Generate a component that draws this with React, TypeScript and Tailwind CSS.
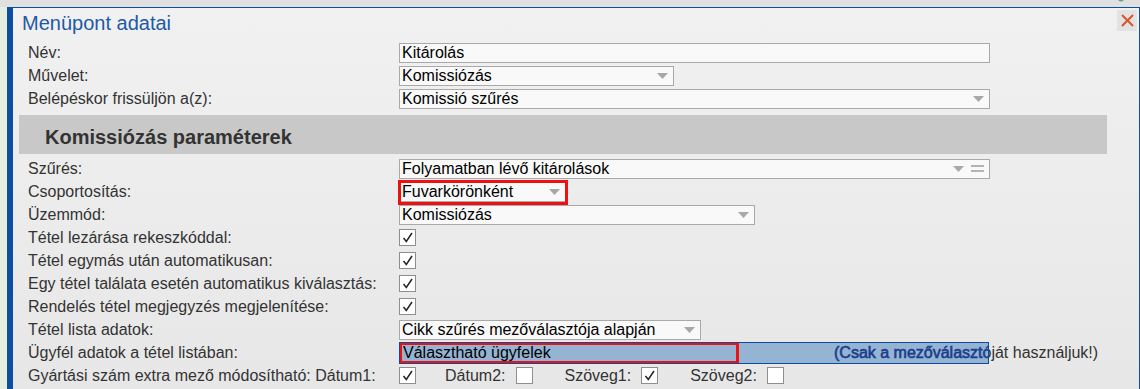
import React from 'react';

const font = { fontFamily: '"Liberation Sans", Arial, sans-serif' };

function Arrow() {
  return (
    <svg width="11" height="6" viewBox="0 0 11 6" className="shrink-0">
      <path d="M0 0 H11 L5.5 6 Z" fill="#a8a8a8" />
    </svg>
  );
}

function Select({ value, width, extra }: { value: string; width: string; extra?: boolean }) {
  return (
    <div className={`${width} h-[20px] border border-[#a9a9a9] bg-[#f9f9f9] flex items-center pl-[2px] pr-[5px]`}>
      <span className="flex-1 text-[16px] leading-[18px] text-black whitespace-nowrap">{value}</span>
      <Arrow />
      {extra && (
        <div className="ml-[7px] w-[13px] flex flex-col gap-[3px]">
          <div className="h-[2px] bg-[#b4b4b4]" />
          <div className="h-[2px] bg-[#b4b4b4]" />
        </div>
      )}
    </div>
  );
}

function Check({ checked }: { checked?: boolean }) {
  return (
    <div className="w-[17px] h-[17px] border border-[#8e8e8e] bg-white flex items-center justify-center shrink-0">
      {checked && (
        <svg width="15" height="15" viewBox="0 0 15 15">
          <path d="M3.5 8 L6.3 11.5 L12 3" fill="none" stroke="#222" strokeWidth="1.5" />
        </svg>
      )}
    </div>
  );
}

function Row({ label, children }: { label: string; children?: React.ReactNode }) {
  return (
    <div className="flex items-center h-[23px]">
      <div className="w-[380px] pl-[9px] text-[16px] text-[#333] whitespace-nowrap">{label}</div>
      {children}
    </div>
  );
}

export default function App() {
  return (
    <div className="w-[1140px] h-[389px] overflow-hidden flex flex-col bg-[#e0e0e0] relative" style={font}>
      {/* top strip */}
      <div className="h-[7px] shrink-0 relative">
        <svg className="absolute left-[1116px] top-[-6px]" width="10" height="10" viewBox="0 0 10 10">
          <path d="M0 3 Q5 12 10 3 L10 0 L0 0 Z" fill="#4fae7c" />
        </svg>
      </div>

      <div className="flex flex-1 min-h-0">
        <div className="w-[7px] bg-[#e4efdf]" />
        <div className="flex-1 relative border-l-[6px] border-t border-r border-[#0d4f9f] bg-linear-to-b from-[#f1f1f1] to-[#e7e7e7]">
          {/* close */}
          <button className="absolute top-[2px] right-[2px] w-[20px] h-[21px] bg-[#e2e2e2] flex items-center justify-center">
            <svg width="13" height="13" viewBox="0 0 13 13">
              <path d="M1 1 L12 12 M12 1 L1 12" stroke="#d9532c" strokeWidth="2" />
            </svg>
          </button>

          <div className="pt-[3px] pl-[9px] h-[27px] text-[20px] leading-[24px] text-[#1d5aa6]">Menüpont adatai</div>

          <div className="ml-[6px] w-[1088px] mt-[6px]">
            <Row label="Név:">
              <div className="w-[591px] h-[20px] border border-[#a9a9a9] bg-[#f9f9f9] pl-[2px] text-[16px] leading-[18px] text-black">
                Kitárolás
              </div>
            </Row>
            <Row label="Művelet:">
              <Select value="Komissiózás" width="w-[275px]" />
            </Row>
            <Row label="Belépéskor frissüljön a(z):">
              <Select value="Komissió szűrés" width="w-[591px]" />
            </Row>

            <div className="mt-[5px] h-[39px] bg-[#c8c8c8] pl-[26px] pt-[5px] flex items-center text-[20px] font-bold text-[#333]">
              Komissiózás paraméterek
            </div>

            <div className="mt-[3px]">
              <Row label="Szűrés:">
                <Select value="Folyamatban lévő kitárolások" width="w-[591px]" extra />
              </Row>
              <Row label="Csoportosítás:">
                <div className="relative">
                  <Select value="Fuvarkörönként" width="w-[167px]" />
                  <div className="absolute left-[-1px] top-[-2px] w-[170px] h-[25px] border-[3px] border-[#ee1111]" />
                </div>
              </Row>
              <Row label="Üzemmód:">
                <Select value="Komissiózás" width="w-[356px]" />
              </Row>
              <Row label="Tétel lezárása rekeszkóddal:">
                <Check checked />
              </Row>
              <Row label="Tétel egymás után automatikusan:">
                <Check checked />
              </Row>
              <Row label="Egy tétel találata esetén automatikus kiválasztás:">
                <Check checked />
              </Row>
              <Row label="Rendelés tétel megjegyzés megjelenítése:">
                <Check checked />
              </Row>
              <Row label="Tétel lista adatok:">
                <Select value="Cikk szűrés mezőválasztója alapján" width="w-[302px]" />
              </Row>
              <div className="flex items-center h-[23px] relative">
                <div className="w-[380px] pl-[9px] text-[16px] text-[#333] whitespace-nowrap">Ügyfél adatok a tétel listában:</div>
                <span className="absolute left-[815px] text-[16px] text-[#333] whitespace-nowrap">
                  (Csak a mezőválasztóját használjuk!)
                </span>
                <div className="relative z-10 w-[590px] h-[22px] bg-[#95b3d3] border border-[#0b4c9c] overflow-hidden flex items-center">
                  <span className="pl-[3px] text-[16px] text-black whitespace-nowrap">Választható ügyfelek</span>
                  <span className="absolute left-[434px] text-[16px] text-[#1a3d8c] whitespace-nowrap [-webkit-text-stroke:0.6px_#1a3d8c]">
                    (Csak a mezőválasztóját használjuk!)
                  </span>
                  <div className="absolute left-[-1px] top-[-1px] w-[340px] h-[22px] border-[3px] border-[#ee1111]" />
                </div>
              </div>
              <Row label="Gyártási szám extra mező módosítható: Dátum1:">
                <Check checked />
                <span className="ml-[29px] text-[16px] text-[#333]">Dátum2:</span>
                <div className="ml-[11px]"><Check /></div>
                <span className="ml-[31px] text-[16px] text-[#333]">Szöveg1:</span>
                <div className="ml-[10px]"><Check checked /></div>
                <span className="ml-[32px] text-[16px] text-[#333]">Szöveg2:</span>
                <div className="ml-[10px]"><Check /></div>
              </Row>
            </div>
          </div>
        </div>
      </div>
    </div>
  );
}
